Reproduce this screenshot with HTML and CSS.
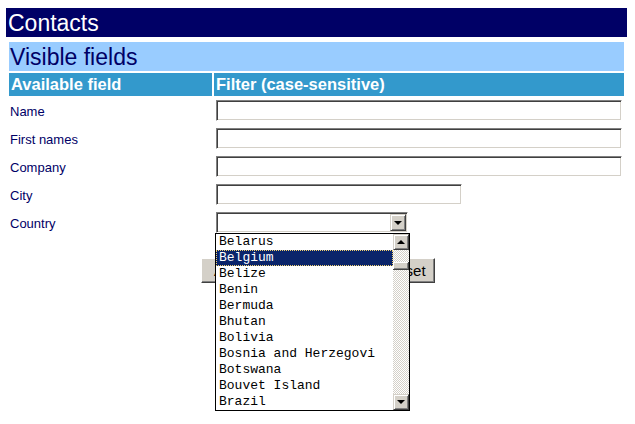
FILE: index.html
```html
<!DOCTYPE html>
<html lang="en">
<head>
  <meta charset="UTF-8">
  <title>Contacts</title>
  <link rel="stylesheet" href="styles.css">
</head>
<body>
  <div class="title-bar">Contacts</div>
  <div class="section-bar">Visible fields</div>

  <div class="fields">
    <div class="head">Available field</div>
    <div class="head">Filter (case-sensitive)</div>

    <div class="label">Name</div>
    <div class="cell"><div class="field wide"></div></div>

    <div class="label">First names</div>
    <div class="cell"><div class="field wide"></div></div>

    <div class="label">Company</div>
    <div class="cell"><div class="field wide"></div></div>

    <div class="label">City</div>
    <div class="cell"><div class="field city"></div></div>

    <div class="label">Country</div>
    <div class="cell">
      <div class="select">
        <div class="field country"></div>
        <span class="drop-btn"><span class="arrow-down"></span></span>

        <!-- open dropdown list -->
        <div class="listbox">
          <ul class="options">
            <li>Belarus</li>
            <li class="selected">Belgium</li>
            <li>Belize</li>
            <li>Benin</li>
            <li>Bermuda</li>
            <li>Bhutan</li>
            <li>Bolivia</li>
            <li>Bosnia and Herzegovi</li>
            <li>Botswana</li>
            <li>Bouvet Island</li>
            <li>Brazil</li>
          </ul>
          <div class="scrollbar">
            <span class="sb-btn"><span class="arrow-up"></span></span>
            <div class="track">
              <span class="thumb"></span>
            </div>
            <span class="sb-btn"><span class="arrow-down"></span></span>
          </div>
        </div>
      </div>
    </div>
  </div>

  <div class="actions">
    <button class="btn apply">Apply filter</button>
    <button class="btn reset">Reset</button>
  </div>
</body>
</html>
```

FILE: styles.css
```css
* {
  margin: 0;
  padding: 0;
  box-sizing: border-box;
}

html,
body {
  min-height: 100vh;
}

body {
  background: #fff;
  font-family: "Liberation Sans", Arial, sans-serif;
  padding-top: 8px;
}

.title-bar {
  margin: 0 8px 0 6px;
  height: 29px;
  padding-left: 2px;
  background: #000066;
  color: #fff;
  font-size: 23px;
  line-height: 30px;
}

.section-bar {
  margin: 5px 11px 0 9px;
  height: 29px;
  padding-left: 1px;
  background: #99ccff;
  color: #000066;
  font-size: 23px;
  line-height: 30px;
}

.fields {
  display: grid;
  grid-template-columns: 203px 1fr;
  grid-template-rows: 23px;
  grid-auto-rows: 26px;
  gap: 2px;
  margin: 2px 11px 0 9px;
}

.fields .head {
  height: 23px;
  padding-left: 2px;
  background: #3399cc;
  color: #fff;
  font-size: 16.5px;
  font-weight: bold;
  line-height: 23px;
}

.label {
  display: flex;
  align-items: center;
  padding-left: 1px;
  color: #000066;
  font-size: 13px;
}

.cell {
  padding: 2px 0 0 2px;
}

.field {
  height: 21px;
  background: #fff;
  border-top: 1px solid #808080;
  border-left: 1px solid #808080;
  border-right: 1px solid #fff;
  border-bottom: 1px solid #fff;
  box-shadow: inset 1px 1px 0 #404040, inset -1px -1px 0 #d4d0c8;
}

.field.wide {
  width: 406px;
}

.field.city {
  width: 246px;
}

.field.country {
  width: 192px;
}

.select {
  position: relative;
  width: 192px;
}

.drop-btn,
.sb-btn {
  display: flex;
  align-items: center;
  justify-content: center;
  width: 16px;
  height: 16px;
  background: #d4d0c8;
  border-top: 1px solid #d4d0c8;
  border-left: 1px solid #d4d0c8;
  border-right: 1px solid #404040;
  border-bottom: 1px solid #404040;
  box-shadow: inset 1px 1px 0 #fff, inset -1px -1px 0 #808080;
}

.drop-btn {
  position: absolute;
  top: 2px;
  right: 2px;
  height: 17px;
}

.arrow-down {
  width: 0;
  height: 0;
  border-left: 4px solid transparent;
  border-right: 4px solid transparent;
  border-top: 4px solid #000;
}

.arrow-up {
  width: 0;
  height: 0;
  border-left: 4px solid transparent;
  border-right: 4px solid transparent;
  border-bottom: 4px solid #000;
}

.listbox {
  position: absolute;
  top: 21px;
  left: -1px;
  z-index: 5;
  display: flex;
  width: 195px;
  height: 178px;
  background: #fff;
  border: 1px solid #000;
}

.options {
  flex: 1;
  list-style: none;
  font-family: "Liberation Mono", "Courier New", monospace;
  font-size: 13px;
  color: #000;
}

.options li {
  height: 16px;
  padding-left: 3px;
  line-height: 16px;
  white-space: nowrap;
  overflow: hidden;
}

.options li.selected {
  background: #0a246a;
  color: #fff;
  outline: 1px dotted #f0d070;
  outline-offset: -1px;
}

.scrollbar {
  display: flex;
  flex-direction: column;
  width: 16px;
}

.track {
  flex: 1;
  position: relative;
  background-color: #fff;
  background-image: repeating-conic-gradient(#d4d0c8 0 25%, #fff 0 50%);
  background-size: 2px 2px;
}

.thumb {
  position: absolute;
  top: 12px;
  left: 0;
  width: 16px;
  height: 8px;
  background: #d4d0c8;
  border-right: 1px solid #404040;
  border-bottom: 1px solid #404040;
  box-shadow: inset 1px 1px 0 #fff, inset -1px -1px 0 #808080;
}

.actions {
  display: flex;
  justify-content: center;
  gap: 4px;
  margin-top: 22px;
  padding-left: 1px;
}

.btn {
  height: 25px;
  background: #d4d0c8;
  color: #000;
  font-family: "Liberation Sans", Tahoma, sans-serif;
  font-size: 15px;
  border-top: 1px solid #fff;
  border-left: 1px solid #fff;
  border-right: 1px solid #404040;
  border-bottom: 1px solid #404040;
  box-shadow: inset -1px -1px 0 #808080;
}

.btn.apply {
  width: 172px;
  text-align: left;
  padding-left: 12px;
}

.btn.reset {
  width: 58px;
}
```
